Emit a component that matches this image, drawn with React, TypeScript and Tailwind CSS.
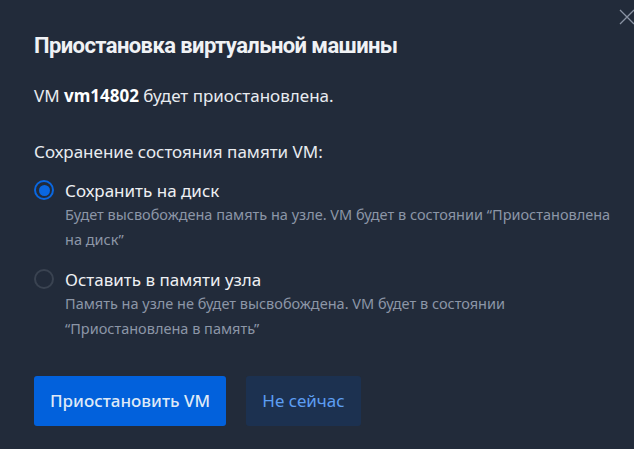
import React from "react";

export default function App() {
  return (
    <div
      className="w-[634px] h-[449px] bg-[#222b3a] relative overflow-hidden text-[#e8ebf0]"
      style={{ fontFamily: '"Noto Sans", "Open Sans", sans-serif' }}
    >
      <svg className="absolute left-[619px] top-[9px]" width="16" height="16" viewBox="0 0 16 16">
        <path d="M1 1 L15 15 M15 1 L1 15" stroke="#8a93a3" strokeWidth="1.3" />
      </svg>
      <div className="pl-[34px] pt-[30px] flex flex-col">
        <h1
          className="text-[22px] font-bold leading-[32px] tracking-[-0.6px] text-[#f0f2f5]"
          style={{ fontFamily: 'Roboto, "Noto Sans", sans-serif' }}
        >
          Приостановка виртуальной машины
        </h1>
        <p className="mt-[22px] text-[17px] leading-[24px]">
          VM <b className="font-bold text-white">vm14802</b> будет приостановлена.
        </p>
        <p className="mt-[32px] text-[17px] leading-[24px]">Сохранение состояния памяти VM:</p>
        <div className="mt-[16px] flex flex-col gap-[17px]">
          <div className="flex gap-[11px]">
            <div className="w-[20px] h-[20px] rounded-full border-2 border-[#0a67e0] flex items-center justify-center shrink-0">
              <div className="w-[11px] h-[11px] rounded-full bg-[#0a67e0]" />
            </div>
            <div className="flex flex-col">
              <span className="text-[17px] leading-[22px] text-[#eef0f3]">Сохранить на диск</span>
              <span className="text-[14.5px] leading-[25px] text-[#8c96a7] w-[560px]">
                Будет высвобождена память на узле. VM будет в состоянии “Приостановлена на диск”
              </span>
            </div>
          </div>
          <div className="flex gap-[11px]">
            <div className="w-[20px] h-[20px] rounded-full border-2 border-[#3a4351] shrink-0" />
            <div className="flex flex-col">
              <span className="text-[17px] leading-[22px] text-[#eef0f3]">Оставить в памяти узла</span>
              <span className="text-[14.5px] leading-[25px] text-[#8c96a7] w-[560px]">
                Память на узле не будет высвобождена. VM будет в состоянии “Приостановлена в память”
              </span>
            </div>
          </div>
        </div>
        <div className="mt-[35px] flex gap-[20px]">
          <button className="w-[192px] h-[50px] rounded-[3px] bg-[#0261dc] text-[17px] font-medium text-[#dfe9f7]">
            Приостановить VM
          </button>
          <button className="w-[115px] h-[50px] rounded-[3px] bg-[#1c3150] text-[17px] text-[#5d9ef2]">
            Не сейчас
          </button>
        </div>
      </div>
    </div>
  );
}
